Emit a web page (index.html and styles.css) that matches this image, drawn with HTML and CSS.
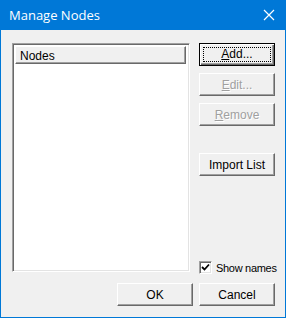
FILE: index.html
```html
<!DOCTYPE html>
<html lang="en">
<head>
    <meta charset="UTF-8">
    <title>Manage Nodes</title>
    <link rel="stylesheet" href="styles.css">
</head>
<body>

<!-- Dialog window -->
<div class="window">
    <div class="title-bar">
        <span class="title">Manage Nodes</span>
        <svg class="close" width="12" height="12" viewBox="0 0 12 12">
            <path d="M1 1 L11 11 M11 1 L1 11" stroke="#fff" stroke-width="1.2" fill="none"/>
        </svg>
    </div>

    <div class="client">
        <div class="main">
            <!-- Node list -->
            <div class="list-box">
                <div class="list-header">
                    <div class="header-cell">Nodes</div>
                </div>
            </div>

            <!-- Side buttons -->
            <div class="side">
                <button class="btn default"><span class="focus"><u>A</u>dd...</span></button>
                <button class="btn disabled"><u>E</u>dit...</button>
                <button class="btn disabled"><u>R</u>emove</button>
                <button class="btn import">Import List</button>
                <label class="check">
                    <span class="box">
                        <svg width="9" height="9" viewBox="0 0 9 9">
                            <path d="M1 4 L3.5 6.5 L8 1.5" stroke="#000" stroke-width="1.8" fill="none"/>
                        </svg>
                    </span>
                    Show names
                </label>
            </div>
        </div>

        <div class="footer">
            <button class="btn">OK</button>
            <button class="btn">Cancel</button>
        </div>
    </div>
</div>

</body>
</html>
```

FILE: styles.css
```css
/* Common */
body {
    margin: 0;
    padding: 0;
    font-family: 'Liberation Sans', Arial, sans-serif;
    font-size: 11px;
    color: #000;
}

.window {
    width: 286px;
    height: 318px;
    box-sizing: border-box;
    border: 1px solid #0078d7;
    border-top: none;
    display: flex;
    flex-direction: column;
    background: #f0f0f0;
}

/* Title bar */
.title-bar {
    height: 30px;
    background: #0078d7;
    margin: 0 -1px;
    display: flex;
    align-items: center;
    justify-content: space-between;
    padding: 0 10px 0 9px;
}

.title {
    color: #fff;
    font-family: 'Open Sans', 'Noto Sans', sans-serif;
    font-size: 13px;
}

.close {
    margin-right: 1px;
}

/* Client area */
.client {
    flex: 1;
    display: flex;
    flex-direction: column;
    padding: 13px 10px 11px 11px;
}

.main {
    display: flex;
    gap: 9px;
    height: 229px;
}

/* List box */
.list-box {
    width: 178px;
    box-sizing: border-box;
    background: #fff;
    border: 1px solid;
    border-color: #a0a0a0 #fff #fff #a0a0a0;
    box-shadow: inset 1px 1px 0 #696969, inset -1px -1px 0 #e3e3e3;
    padding: 2px 2px 2px 2px;
}

.list-header {
    display: flex;
    margin-right: 1px;
}

.header-cell {
    flex: 1;
    height: 18px;
    box-sizing: border-box;
    background: #f0f0f0;
    border: 1px solid;
    border-color: #fff #696969 #696969 #fff;
    box-shadow: inset -1px -1px 0 #a0a0a0;
    padding: 2px 0 0 4px;
    font-size: 12px;
}

/* Buttons */
.side {
    width: 76px;
    display: flex;
    flex-direction: column;
}

.btn {
    width: 76px;
    height: 23px;
    box-sizing: border-box;
    background: #f0f0f0;
    border: 1px solid;
    border-color: #fff #696969 #696969 #fff;
    box-shadow: inset -1px -1px 0 #a0a0a0;
    font-family: 'Liberation Sans', Arial, sans-serif;
    font-size: 12px;
    color: #000;
    padding: 0;
    margin-bottom: 7px;
}

.btn.default {
    border: 1px solid #000;
    box-shadow: inset 1px 1px 0 #fff, inset -1px -1px 0 #696969, inset -2px -2px 0 #a0a0a0;
    padding: 3px;
}

.focus {
    display: block;
    height: 100%;
    box-sizing: border-box;
    border: 1px dotted #000;
    line-height: 13px;
}

.btn.disabled {
    color: #a0a0a0;
    text-shadow: 1px 1px 0 #fff;
}

.btn.import {
    margin-top: 20px;
}

/* Checkbox */
.check {
    margin-top: auto;
    margin-bottom: -2px;
    display: flex;
    align-items: center;
    gap: 4px;
    font-size: 11px;
    letter-spacing: -0.3px;
    white-space: nowrap;
}

.box {
    width: 13px;
    height: 13px;
    flex: none;
    box-sizing: border-box;
    background: #fff;
    border: 1px solid;
    border-color: #a0a0a0 #fff #fff #a0a0a0;
    box-shadow: inset 1px 1px 0 #696969, inset -1px -1px 0 #e3e3e3;
    display: flex;
    align-items: center;
    justify-content: center;
}

/* Footer */
.footer {
    margin-top: auto;
    display: flex;
    justify-content: flex-end;
    gap: 6px;
}

.footer .btn {
    margin-bottom: 0;
}
```
